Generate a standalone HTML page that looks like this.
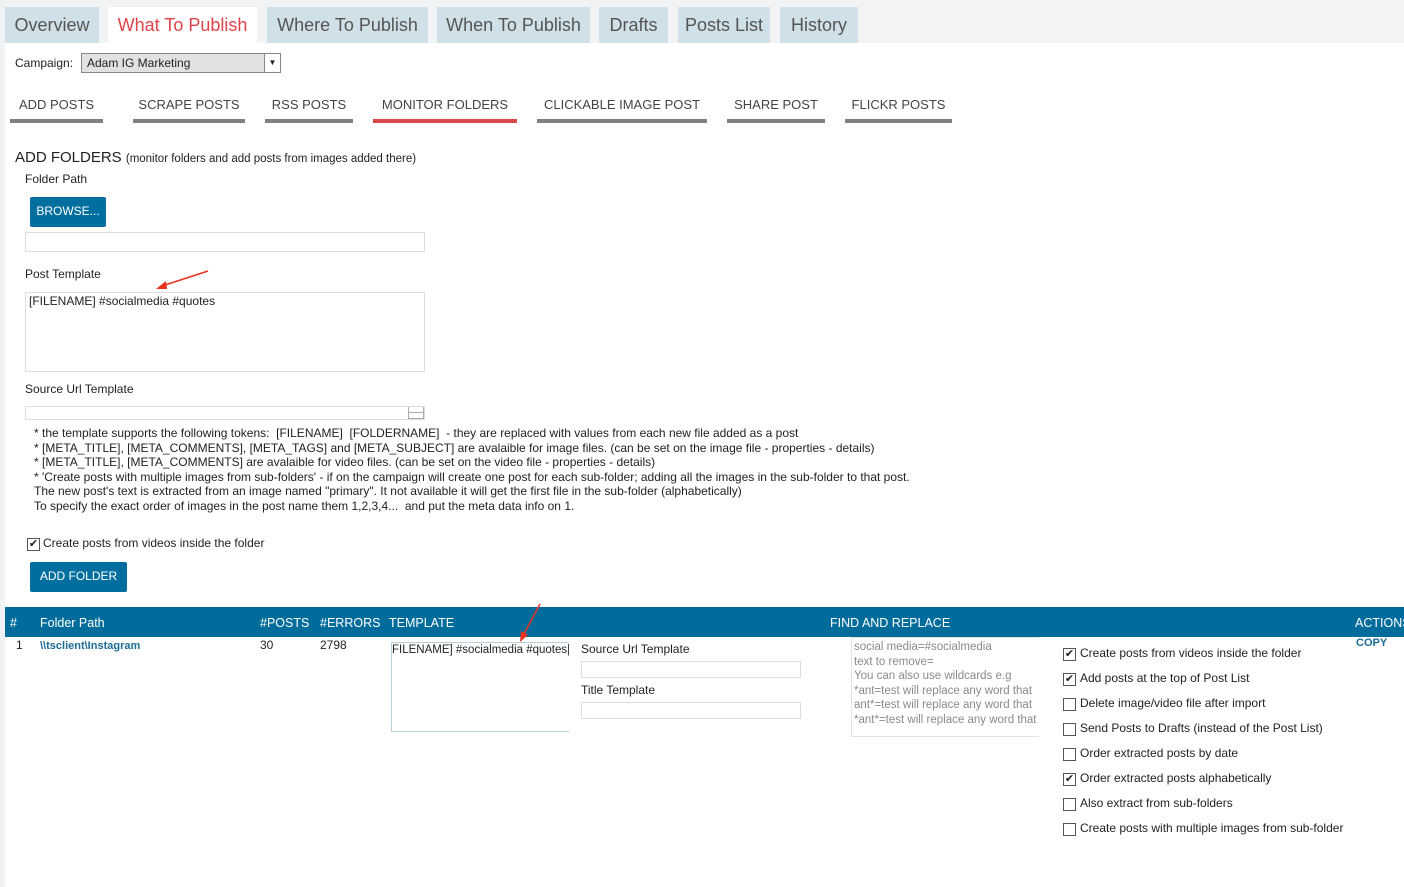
<!DOCTYPE html>
<html><head><meta charset="utf-8"><style>
*{margin:0;padding:0;box-sizing:border-box}
body{width:1404px;height:887px;position:relative;background:#fff;font-family:"Liberation Sans",sans-serif;color:#222;overflow:hidden;font-size:12px}
.a{position:absolute;white-space:nowrap}
.strip{left:0;top:0;width:5px;height:887px;background:#f0f2f3}
.top{left:0;top:0;width:1404px;height:43px;background:#f1f3f4}
.tab{top:7px;height:36px;background:#cfe0e8;font-size:18px;color:#555;line-height:36px;text-align:center}
.st{top:97px;font-size:13px;color:#444;text-align:center;height:26px;border-bottom:4px solid #808080}
.btn{background:#006f9f;color:#fff;font-size:12px;text-align:center;border-radius:2px}
.inp{border:1px solid #ddd;background:#fff}
.cb{width:13px;height:13px;border:1px solid #555;background:#fff;font-size:11px;line-height:11px;text-align:center;color:#222}
.th{top:607px;height:30px;left:5px;width:1399px;background:#006c9c}
.hd{top:616px;color:#fff;font-size:12.5px}
.note{font-size:12px;color:#222;line-height:14.5px}
.chk{font-size:12px;color:#222}
</style></head><body>
<div class="a top"></div>
<div class="a strip"></div>
<div class="a tab" style="left:5px;width:94px">Overview</div>
<div class="a tab" style="left:108px;width:149px;background:#fff;color:#e0434a">What To Publish</div>
<div class="a tab" style="left:267px;width:161px">Where To Publish</div>
<div class="a tab" style="left:437px;width:153px">When To Publish</div>
<div class="a tab" style="left:599px;width:69px">Drafts</div>
<div class="a tab" style="left:678px;width:92px">Posts List</div>
<div class="a tab" style="left:780px;width:78px">History</div>

<div class="a" style="left:15px;top:56px;font-size:12px">Campaign:</div>
<div class="a" style="left:81px;top:53px;width:200px;height:20px;border:1px solid #888;background:#e2e2e2;font-size:12px;padding:2px 5px">Adam IG Marketing</div>
<div class="a" style="left:264px;top:54px;width:16px;height:18px;border-left:1px solid #888;background:#fff;font-size:8px;text-align:center;line-height:18px">▼</div>

<div class="a st" style="left:10px;width:93px">ADD POSTS</div>
<div class="a st" style="left:133px;width:112px">SCRAPE POSTS</div>
<div class="a st" style="left:265px;width:88px">RSS POSTS</div>
<div class="a st" style="left:373px;width:144px;border-color:#d9494c">MONITOR FOLDERS</div>
<div class="a st" style="left:537px;width:170px">CLICKABLE IMAGE POST</div>
<div class="a st" style="left:727px;width:98px">SHARE POST</div>
<div class="a st" style="left:845px;width:107px">FLICKR POSTS</div>

<div class="a" style="left:15px;top:149px;font-size:15px">ADD FOLDERS <span style="font-size:11.5px">(monitor folders and add posts from images added there)</span></div>
<div class="a" style="left:25px;top:172px">Folder Path</div>
<div class="a btn" style="left:30px;top:197px;width:76px;height:30px;line-height:28px">BROWSE...</div>
<div class="a inp" style="left:25px;top:232px;width:400px;height:20px"></div>
<div class="a" style="left:25px;top:267px">Post Template</div>
<div class="a inp" style="left:25px;top:292px;width:400px;height:80px;padding:1px 3px">[FILENAME] #socialmedia #quotes</div>
<svg class="a" style="left:150px;top:266px" width="65" height="28"><line x1="58" y1="5" x2="12" y2="20" stroke="#e8321e" stroke-width="1.5"/><path d="M6 23 L16 15 L17 23Z" fill="#e8321e"/></svg>
<div class="a" style="left:25px;top:382px">Source Url Template</div>
<div class="a inp" style="left:25px;top:406px;width:400px;height:14px"></div>
<div class="a" style="left:408px;top:407px;width:16px;height:12px;border:1px solid #aaa;border-top:none"><div style="border-top:1px solid #aaa;margin-top:5px"></div></div>
<div class="a note" style="left:34px;top:426px">* the template supports the following tokens:&nbsp; [FILENAME]&nbsp; [FOLDERNAME]&nbsp; - they are replaced with values from each new file added as a post<br>* [META_TITLE], [META_COMMENTS], [META_TAGS] and [META_SUBJECT] are avalaible for image files. (can be set on the image file - properties - details)<br>* [META_TITLE], [META_COMMENTS] are avalaible for video files. (can be set on the video file - properties - details)<br>* 'Create posts with multiple images from sub-folders' - if on the campaign will create one post for each sub-folder; adding all the images in the sub-folder to that post.<br>The new post's text is extracted from an image named "primary". It not available it will get the first file in the sub-folder (alphabetically)<br>To specify the exact order of images in the post name them 1,2,3,4...&nbsp; and put the meta data info on 1.</div>
<div class="a cb" style="left:27px;top:538px">✔</div>
<div class="a chk" style="left:43px;top:536px">Create posts from videos inside the folder</div>
<div class="a btn" style="left:30px;top:562px;width:97px;height:30px;line-height:28px">ADD FOLDER</div>

<div class="a th"></div>
<div class="a hd" style="left:10px">#</div>
<div class="a hd" style="left:40px">Folder Path</div>
<div class="a hd" style="left:260px">#POSTS</div>
<div class="a hd" style="left:320px">#ERRORS</div>
<div class="a hd" style="left:389px">TEMPLATE</div>
<div class="a hd" style="left:830px">FIND AND REPLACE</div>
<div class="a hd" style="left:1355px">ACTIONS</div>

<div class="a" style="left:16px;top:638px">1</div>
<div class="a" style="left:40px;top:640px;color:#1b6c96;font-weight:bold;font-size:11px">\\tsclient\Instagram</div>
<div class="a" style="left:260px;top:638px">30</div>
<div class="a" style="left:320px;top:638px">2798</div>
<div class="a" style="left:391px;top:642px;width:178px;height:90px;border:1px solid #b8cfe0;border-right:none;padding:1px 0;overflow:hidden;font-size:11.5px">FILENAME] #socialmedia #quotes|</div>
<svg class="a" style="left:515px;top:602px" width="30" height="42"><line x1="25" y1="2" x2="9" y2="32" stroke="#e8321e" stroke-width="1.5"/><path d="M5 40 L6 29 L13 33Z" fill="#e8321e"/></svg>
<div class="a" style="left:581px;top:642px">Source Url Template</div>
<div class="a inp" style="left:581px;top:661px;width:220px;height:17px"></div>
<div class="a" style="left:581px;top:683px">Title Template</div>
<div class="a inp" style="left:581px;top:702px;width:220px;height:17px"></div>
<div class="a" style="left:851px;top:637px;width:188px;height:100px;border:1px solid #e2e2e2;border-right:none;color:#8a8a8a;font-size:11.5px;line-height:14.5px;padding:2px 2px;overflow:hidden">social media=#socialmedia<br>text to remove=<br>You can also use wildcards e.g<br>*ant=test will replace any word that<br>ant*=test will replace any word that<br>*ant*=test will replace any word that</div>
<div class="a" style="left:1356px;top:637px;color:#1b6c96;font-weight:bold;font-size:11px">COPY</div>

<div class="a cb" style="left:1063px;top:648px">✔</div><div class="a chk" style="left:1080px;top:646px">Create posts from videos inside the folder</div>
<div class="a cb" style="left:1063px;top:673px">✔</div><div class="a chk" style="left:1080px;top:671px">Add posts at the top of Post List</div>
<div class="a cb" style="left:1063px;top:698px"></div><div class="a chk" style="left:1080px;top:696px">Delete image/video file after import</div>
<div class="a cb" style="left:1063px;top:723px"></div><div class="a chk" style="left:1080px;top:721px">Send Posts to Drafts (instead of the Post List)</div>
<div class="a cb" style="left:1063px;top:748px"></div><div class="a chk" style="left:1080px;top:746px">Order extracted posts by date</div>
<div class="a cb" style="left:1063px;top:773px">✔</div><div class="a chk" style="left:1080px;top:771px">Order extracted posts alphabetically</div>
<div class="a cb" style="left:1063px;top:798px"></div><div class="a chk" style="left:1080px;top:796px">Also extract from sub-folders</div>
<div class="a cb" style="left:1063px;top:823px"></div><div class="a chk" style="left:1080px;top:821px;width:264px;overflow:hidden">Create posts with multiple images from sub-folders</div>
</body></html>
